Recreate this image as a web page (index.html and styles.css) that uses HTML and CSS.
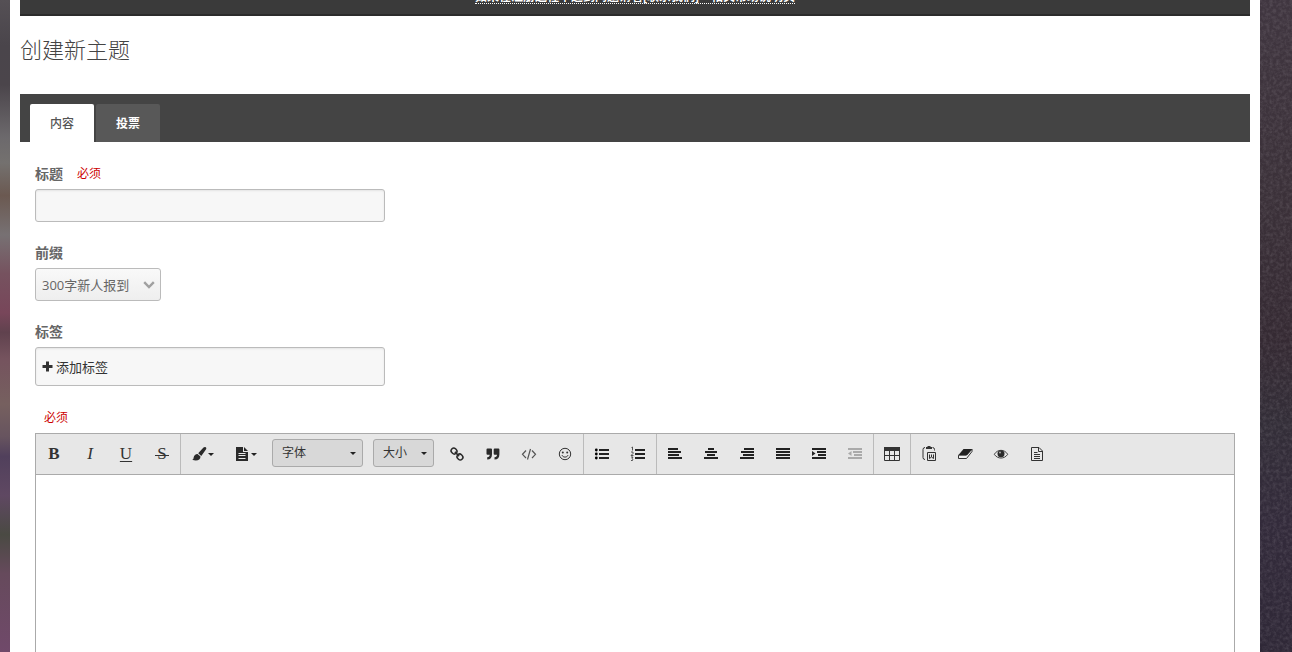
FILE: index.html
```html
<!DOCTYPE html>
<html lang="zh-CN">
<head>
<meta charset="utf-8">
<meta name="viewport" content="width=device-width, initial-scale=1">
<title>创建新主题</title>
<link rel="stylesheet" href="styles.css">
</head>
<body>
<div class="side side-left"></div>
<main class="page">
  <div class="notice"><a class="notice-link" href="#">如果在注册过程中遇到问题请看[联系我们]一相关帮助说明页</a></div>
  <h1 class="title">创建新主题</h1>
  <div class="tabs" role="tablist">
    <button class="tab tab-active" type="button" role="tab" aria-selected="true">内容</button>
    <button class="tab" type="button" role="tab" aria-selected="false">投票</button>
  </div>
  <form class="form">
    <div class="field">
      <div class="label-row"><label class="label" for="topic">标题</label><span class="required">必须</span></div>
      <input class="input" id="topic" type="text">
    </div>
    <div class="field">
      <div class="label-row"><label class="label" for="prefix">前缀</label></div>
      <div class="select-wrap">
        <select class="select" id="prefix"><option>300字新人报到</option></select>
        <svg class="chevron" width="12" height="8" viewBox="0 0 12 8"><path d="M1.200 1.200L6 6l4.800-4.800" fill="none" stroke="#a0a0a0" stroke-width="2.400"/></svg>
      </div>
    </div>
    <div class="field">
      <div class="label-row"><span class="label">标签</span></div>
      <div class="tagbox">
        <button class="add-tag" type="button"><svg width="11" height="11" viewBox="0 0 11 11"><path d="M4 0.500h3V4h3.500v3H7v3.500H4V7H0.500V4H4z" fill="#333"/></svg>添加标签</button>
      </div>
    </div>
    <div class="required editor-required">必须</div>
    <div class="editor">
      <div class="toolbar" role="toolbar">
        <div class="group">
          <button class="tool letter" type="button" aria-label="粗体"><b>B</b></button>
          <button class="tool letter" type="button" aria-label="斜体"><i>I</i></button>
          <button class="tool letter" type="button" aria-label="下划线"><u>U</u></button>
          <button class="tool letter" type="button" aria-label="删除线"><span class="strike">S</span></button>
        </div>
        <div class="group">
          <button class="tool tool-menu" type="button" aria-label="文字颜色"><svg width="16" height="16" viewBox="0 0 16 16"><path d="M14.700 1.200c.9.6.7 1.600.2 2.400L10.300 10 7.200 7.300 12.500 1.600c.7-.7 1.500-.8 2.200-.4zM6.500 8l3 2.600c0 3.300-3.500 5.200-8.500 3.200 1.500-.1 1.400-1.300 1.700-2.600.4-2 2-3.300 3.800-3.200z" fill="#2a2a2a"/></svg><span class="caret"></span></button>
          <button class="tool tool-menu" type="button" aria-label="段落格式"><svg width="16" height="16" viewBox="0 0 16 16"><path d="M2 1h7v5h5v9H2zM10 1l4 4h-4z" fill="#2a2a2a"/><path d="M4.500 7.500h7M4.500 9.500h7M4.500 12.500h7" stroke="#e7e7e7"/></svg><span class="caret"></span></button>
          <button class="combo combo-font" type="button">字体<span class="caret"></span></button>
          <button class="combo combo-size" type="button">大小<span class="caret"></span></button>
          <button class="tool" type="button" aria-label="链接"><svg width="16" height="16" viewBox="0 0 16 16"><g transform="rotate(45 8 8)" fill="none" stroke="#2a2a2a" stroke-width="1.500"><rect x="0.800" y="5.400" width="6" height="5.200" rx="2.500"/><rect x="9.200" y="5.400" width="6" height="5.200" rx="2.500"/><path d="M5 8h6"/></g></svg></button>
          <button class="tool" type="button" aria-label="引用"><svg width="16" height="16" viewBox="0 0 16 16"><path d="M1.500 3.500q0-1 1-1H6q1 0 1 1v4.800c0 3.500-1.600 5.200-4.800 5.200v-2.300c1.700 0 2.500-.7 2.500-2.400H2.500q-1 0-1-1zM8.700 3.500q0-1 1-1h3.700q1 0 1 1v4.800c0 3.500-1.600 5.200-4.900 5.200v-2.300c1.700 0 2.500-.7 2.500-2.400H9.700q-1 0-1-1z" fill="#2a2a2a"/></svg></button>
          <button class="tool" type="button" aria-label="代码"><svg width="16" height="16" viewBox="0 0 16 16"><path d="M5 4.500L1.500 8.300 5 12M11 4.500l3.500 3.800L11 12M9.500 3l-3 10.500" fill="none" stroke="#555" stroke-width="1.200"/></svg></button>
          <button class="tool" type="button" aria-label="表情"><svg width="16" height="16" viewBox="0 0 16 16"><circle cx="8" cy="8" r="5.700" fill="none" stroke="#333"/><circle cx="5.800" cy="6.500" r="1" fill="#333"/><circle cx="10.200" cy="6.500" r="1" fill="#333"/><path d="M5 9.200c.8 2.500 5.200 2.500 6 0" fill="none" stroke="#333"/></svg></button>
        </div>
        <div class="group">
          <button class="tool" type="button" aria-label="无序列表"><svg width="16" height="16" viewBox="0 0 16 16"><path d="M5 4h10M5 8h10M5 12h10" stroke="#222" stroke-width="2"/><circle cx="2.300" cy="4" r="1.400"/><circle cx="2.300" cy="8" r="1.400"/><circle cx="2.300" cy="12" r="1.400"/></svg></button>
          <button class="tool" type="button" aria-label="有序列表"><svg width="16" height="16" viewBox="0 0 16 16"><path d="M5 4h10M5 8h10M5 12h10" stroke="#222" stroke-width="2"/><path d="M1.500 1.500l1-.5V4.500M1 6h2v1.500L1 9.500h2.500M1 11h2L2 12.500l1 .9-.5 1.100H1" fill="none" stroke="#444" stroke-width=".9"/></svg></button>
        </div>
        <div class="group">
          <button class="tool" type="button" aria-label="左对齐"><svg width="16" height="16" viewBox="0 0 16 16"><path d="M1 3h10M1 6h13M1 9h11M1 12h14" stroke="#222" stroke-width="2"/></svg></button>
          <button class="tool" type="button" aria-label="居中"><svg width="16" height="16" viewBox="0 0 16 16"><path d="M5 3h6M2 6h12M4 9h8M1 12h14" stroke="#222" stroke-width="2"/></svg></button>
          <button class="tool" type="button" aria-label="右对齐"><svg width="16" height="16" viewBox="0 0 16 16"><path d="M5 3h10M2 6h13M4 9h11M1 12h14" stroke="#222" stroke-width="2"/></svg></button>
          <button class="tool" type="button" aria-label="两端对齐"><svg width="16" height="16" viewBox="0 0 16 16"><path d="M1 3h14M1 6h14M1 9h14M1 12h14" stroke="#222" stroke-width="2"/></svg></button>
          <button class="tool" type="button" aria-label="增加缩进"><svg width="16" height="16" viewBox="0 0 16 16"><path d="M1 3h14M6 6h9M7 9h8M1 12h14" stroke="#222" stroke-width="2"/><path d="M1 5l3.500 2.500L1 10z" fill="#222"/></svg></button>
          <button class="tool" type="button" aria-label="减少缩进" disabled><svg width="16" height="16" viewBox="0 0 16 16"><path d="M1 3h14M6 6h9M7 9h8M1 12h14" stroke="#aaa" stroke-width="2"/><path d="M4.500 5L1 7.500 4.500 10z" fill="#aaa"/></svg></button>
        </div>
        <div class="group">
          <button class="tool" type="button" aria-label="表格"><svg width="16" height="16" viewBox="0 0 16 16"><path d="M.5 2.500h15v12H.5zM.5 9.500h15M5.500 5v9.500M10.500 5v9.500" fill="none" stroke="#333"/><path d="M0 1h16v4H0z" fill="#333"/></svg></button>
        </div>
        <div class="group group-last">
          <button class="tool" type="button" aria-label="从 Word 粘贴"><svg width="16" height="16" viewBox="0 0 16 16"><path d="M4 1.500q-2 0-2 2v8q0 2 2 2M11.500 1.500q2 0 2 2v1M6.500 6.500h8v8h-8z" fill="none" stroke="#333"/><path d="M5 1h1.500V0h3v1H11v2H5z" fill="#333"/><path d="M8.500 8.500v4l2-1.500 2 1.500v-4M10.500 8.500V11" fill="none" stroke="#333"/></svg></button>
          <button class="tool" type="button" aria-label="清除格式"><svg width="16" height="16" viewBox="0 0 16 16"><path d="M1.500 9.200h8l5.500-6v2.300L9.500 12.500H1.500z" fill="#eee" stroke="#333"/><path d="M6.500 3h8.700l-5.200 6H1.500z" fill="#222"/></svg></button>
          <button class="tool" type="button" aria-label="预览"><svg width="16" height="16" viewBox="0 0 16 16"><path d="M1.300 8.300C4.500 3 11.500 3 14.700 8.300 11.500 13.300 4.500 13.300 1.300 8.300z" fill="none" stroke="#444"/><circle cx="8" cy="7.800" r="3.500" fill="#2a2a2a"/><circle cx="7" cy="6.600" r="1" fill="#aaa"/></svg></button>
          <button class="tool" type="button" aria-label="源代码"><svg width="16" height="16" viewBox="0 0 16 16"><path d="M2.500 1.500h7.500l3.500 3.500v9.500h-11zM9.500 1.500v4h4M5 6.500h3.500M5 8.500h6M5 10.500h6M5 12.500h6" fill="none" stroke="#333"/></svg></button>
        </div>
      </div>
      <textarea class="editor-body" aria-label="正文"></textarea>
    </div>
  </form>
</main>
<div class="side side-right">
  <svg class="grain" width="100%" height="100%" aria-hidden="true"><filter id="grain" x="0" y="0" width="100%" height="100%"><feTurbulence type="fractalNoise" baseFrequency="0.3" numOctaves="3" seed="4"/><feColorMatrix values="0 0 0 0 .75  0 0 0 0 .7  0 0 0 0 .75  .5 0 0 0 -.18"/></filter><rect width="100%" height="100%" filter="url(#grain)"/></svg>
</div>
</body>
</html>
```

FILE: styles.css
```css
* { box-sizing: border-box; }
body {
  margin: 0;
  height: 100vh;
  overflow: hidden;
  display: grid;
  grid-template-columns: 10px minmax(0, 1fr) 32px;
  background: #fff;
  color: #666;
  font: 13px/20px "Open Sans", "Noto Sans CJK SC", sans-serif;
}
button, input, select, textarea { font: inherit; color: inherit; margin: 0; }
button { border: 0; padding: 0; background: none; }
svg { display: block; flex: none; }
.side { height: 100vh; overflow: hidden; }
.side-left {
  background: linear-gradient(#555055 0, #4a454b 7%, #4b454b 13%, #6c696c 21%, #74716f 25%, #6b5951 30%, #777173 36%, #76525f 42%, #78465a 48%, #60424e 51%, #75535e 55%, #76605f 62%, #67545f 67%, #51405c 70%, #5f4862 76%, #4a4a43 82%, #664a5c 88%, #70496a 100%);
}
.side-right { background: linear-gradient(#403640 0, #3b3139 30%, #352a33 52%, #332e38 65%, #332b3b 80%, #2f2837 100%); }
.grain { opacity: .5; }
.page { min-width: 0; height: 100vh; overflow: hidden; padding: 0 10px; display: flex; flex-direction: column; }
.notice {
  flex: none;
  height: 16px;
  overflow: hidden;
  display: flex;
  align-items: flex-end;
  justify-content: center;
  padding-bottom: 10px;
  background: #3a3a3a;
  border-bottom: 2px solid #2b2b2b;
}
.notice-link { color: #fff; font-size: 12px; font-weight: 700; line-height: 12px; white-space: nowrap; border-bottom: 1px dotted #fff; text-decoration: none; }
.title { margin: 17px 0 29px; color: #444; font-size: 22px; line-height: 32px; font-weight: 300; }
.tabs { flex: none; display: flex; gap: 2px; padding: 10px 10px 0; background: #444; }
.tab { width: 64px; height: 38px; padding-top: 2px; border-radius: 2px 2px 0 0; background: #585858; color: #fff; font-size: 12px; font-weight: 700; }
.tab-active { background: #fff; color: #555; font-weight: 500; }
.form { flex: 1; min-height: 0; display: flex; flex-direction: column; padding: 22px 15px 0; }
.field { margin-bottom: 21px; }
.label-row { display: flex; gap: 14px; height: 20px; margin-bottom: 5px; }
.label { font-size: 14px; font-weight: 700; }
.required { color: #c00; font-size: 12px; }
.input, .tagbox { display: block; width: 350px; border: 1px solid #bbb; border-radius: 3px; background: #f7f7f7; box-shadow: inset 0 1px 2px rgba(0, 0, 0, .08); }
.input { height: 33px; padding: 0 6px; }
.select-wrap { position: relative; width: 126px; }
.select { display: block; width: 126px; height: 33px; padding: 0 6px; border: 1px solid #bbb; border-radius: 3px; appearance: none; background: linear-gradient(#f9f9f9, #eee); }
.chevron { position: absolute; right: 6px; top: 13px; pointer-events: none; }
.tagbox { height: 39px; padding: 0 6px; display: flex; align-items: center; }
.add-tag { display: flex; align-items: center; gap: 3px; color: #333; }
.editor-required { padding-left: 9px; margin-bottom: 4px; line-height: 22px; }
.editor { flex: 1; min-height: 0; display: flex; flex-direction: column; border: 1px solid #aaa; border-bottom: 0; }
.toolbar { flex: none; display: flex; height: 41px; background: #e7e7e7; border-bottom: 1px solid #aaa; }
.group { display: flex; align-items: center; border-right: 1px solid #bbb; }
.group-last { border-right: 0; }
.tool { width: 36px; height: 36px; display: flex; align-items: center; justify-content: center; color: #333; }
.tool-menu { width: 43px; gap: 1px; }
.letter { font: 17px/20px "Liberation Serif", serif; }
.letter u { text-underline-offset: 2px; text-decoration-thickness: 1px; }
.strike { padding: 0 2px; background: linear-gradient(#333, #333) 0 11px / 100% 1px no-repeat; }
.caret { border: 3px solid transparent; border-top-color: #222; border-bottom: 0; }
.combo { display: flex; align-items: center; justify-content: space-between; height: 28px; padding: 0 6px 0 9px; margin: 0 10px 2px 0; border: 1px solid #aaa; border-radius: 3px; background: #d8d8d8; color: #333; font-size: 12px; }
.combo-font { width: 91px; margin-left: 5px; }
.combo-size { width: 61px; margin-right: 5px; }
.editor-body { flex: 1; width: 100%; border: 0; resize: none; background: #fff; padding: 10px; outline: 0; }
```
